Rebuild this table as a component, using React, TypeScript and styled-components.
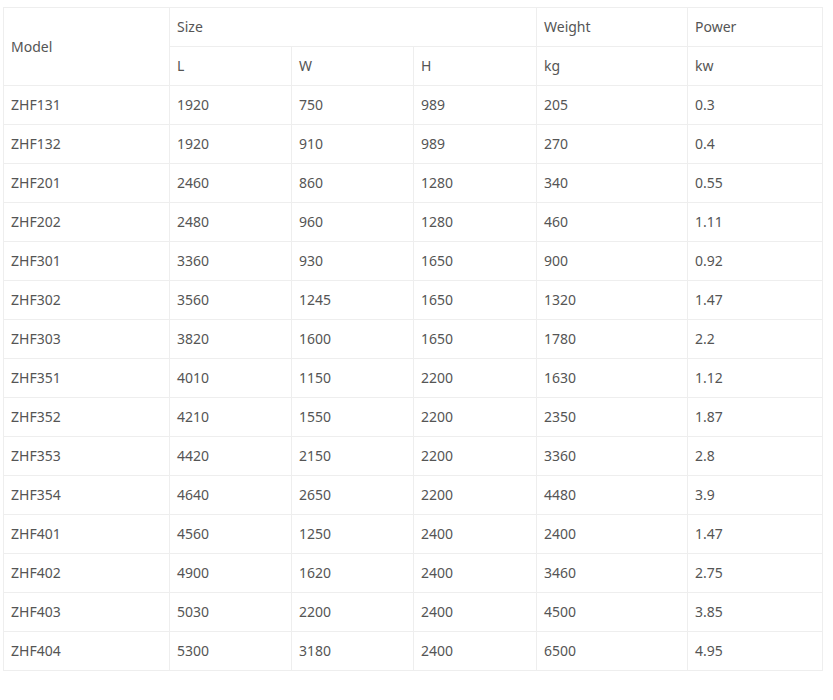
import { createGlobalStyle } from "styled-components"
import styled from "styled-components"

const GlobalStyle = createGlobalStyle`
  body {
    margin: 0;
    background: #fff;
    font-family: "Noto Sans", "Open Sans", "Liberation Sans", sans-serif;
  }
`

type Row = [string, string, string, string, string, string]

const rows: Row[] = [
  ['ZHF131', '1920', '750', '989', '205', '0.3'],
  ['ZHF132', '1920', '910', '989', '270', '0.4'],
  ['ZHF201', '2460', '860', '1280', '340', '0.55'],
  ['ZHF202', '2480', '960', '1280', '460', '1.11'],
  ['ZHF301', '3360', '930', '1650', '900', '0.92'],
  ['ZHF302', '3560', '1245', '1650', '1320', '1.47'],
  ['ZHF303', '3820', '1600', '1650', '1780', '2.2'],
  ['ZHF351', '4010', '1150', '2200', '1630', '1.12'],
  ['ZHF352', '4210', '1550', '2200', '2350', '1.87'],
  ['ZHF353', '4420', '2150', '2200', '3360', '2.8'],
  ['ZHF354', '4640', '2650', '2200', '4480', '3.9'],
  ['ZHF401', '4560', '1250', '2400', '2400', '1.47'],
  ['ZHF402', '4900', '1620', '2400', '3460', '2.75'],
  ['ZHF403', '5030', '2200', '2400', '4500', '3.85'],
  ['ZHF404', '5300', '3180', '2400', '6500', '4.95'],
]

const widths = [166, 122, 122, 123, 151, 135]

function App() {
  return <Page>
    <GlobalStyle />
    <Table>
      <colgroup>
        {widths.map((w, i) => <col key={i} style={{ width: w }} />)}
      </colgroup>
      <thead>
        <tr>
          <Cell as="th" rowSpan={2}>Model</Cell>
          <Cell as="th" colSpan={3}>Size</Cell>
          <Cell as="th">Weight</Cell>
          <Cell as="th">Power</Cell>
        </tr>
        <tr>
          <Cell as="th">L</Cell>
          <Cell as="th">W</Cell>
          <Cell as="th">H</Cell>
          <Cell as="th">kg</Cell>
          <Cell as="th">kw</Cell>
        </tr>
      </thead>
      <tbody>
        {rows.map((r) => (
          <tr key={r[0]}>
            {r.map((v, i) => <Cell key={i}>{v}</Cell>)}
          </tr>
        ))}
      </tbody>
    </Table>
  </Page>
}

export default App

const Page = styled.div`
  padding: 7px 10px 0 3px;
`

const Table = styled.table`
  width: 819px;
  border-collapse: collapse;
  table-layout: fixed;
  border: 1px solid #eeeeee;
`

const Cell = styled.td`
  height: 39px;
  padding: 0 7px 1px;
  border: 1px solid #eeeeee;
  font-size: 14px;
  font-weight: normal;
  color: #555;
  text-align: left;
  vertical-align: middle;
  box-sizing: border-box;
`
